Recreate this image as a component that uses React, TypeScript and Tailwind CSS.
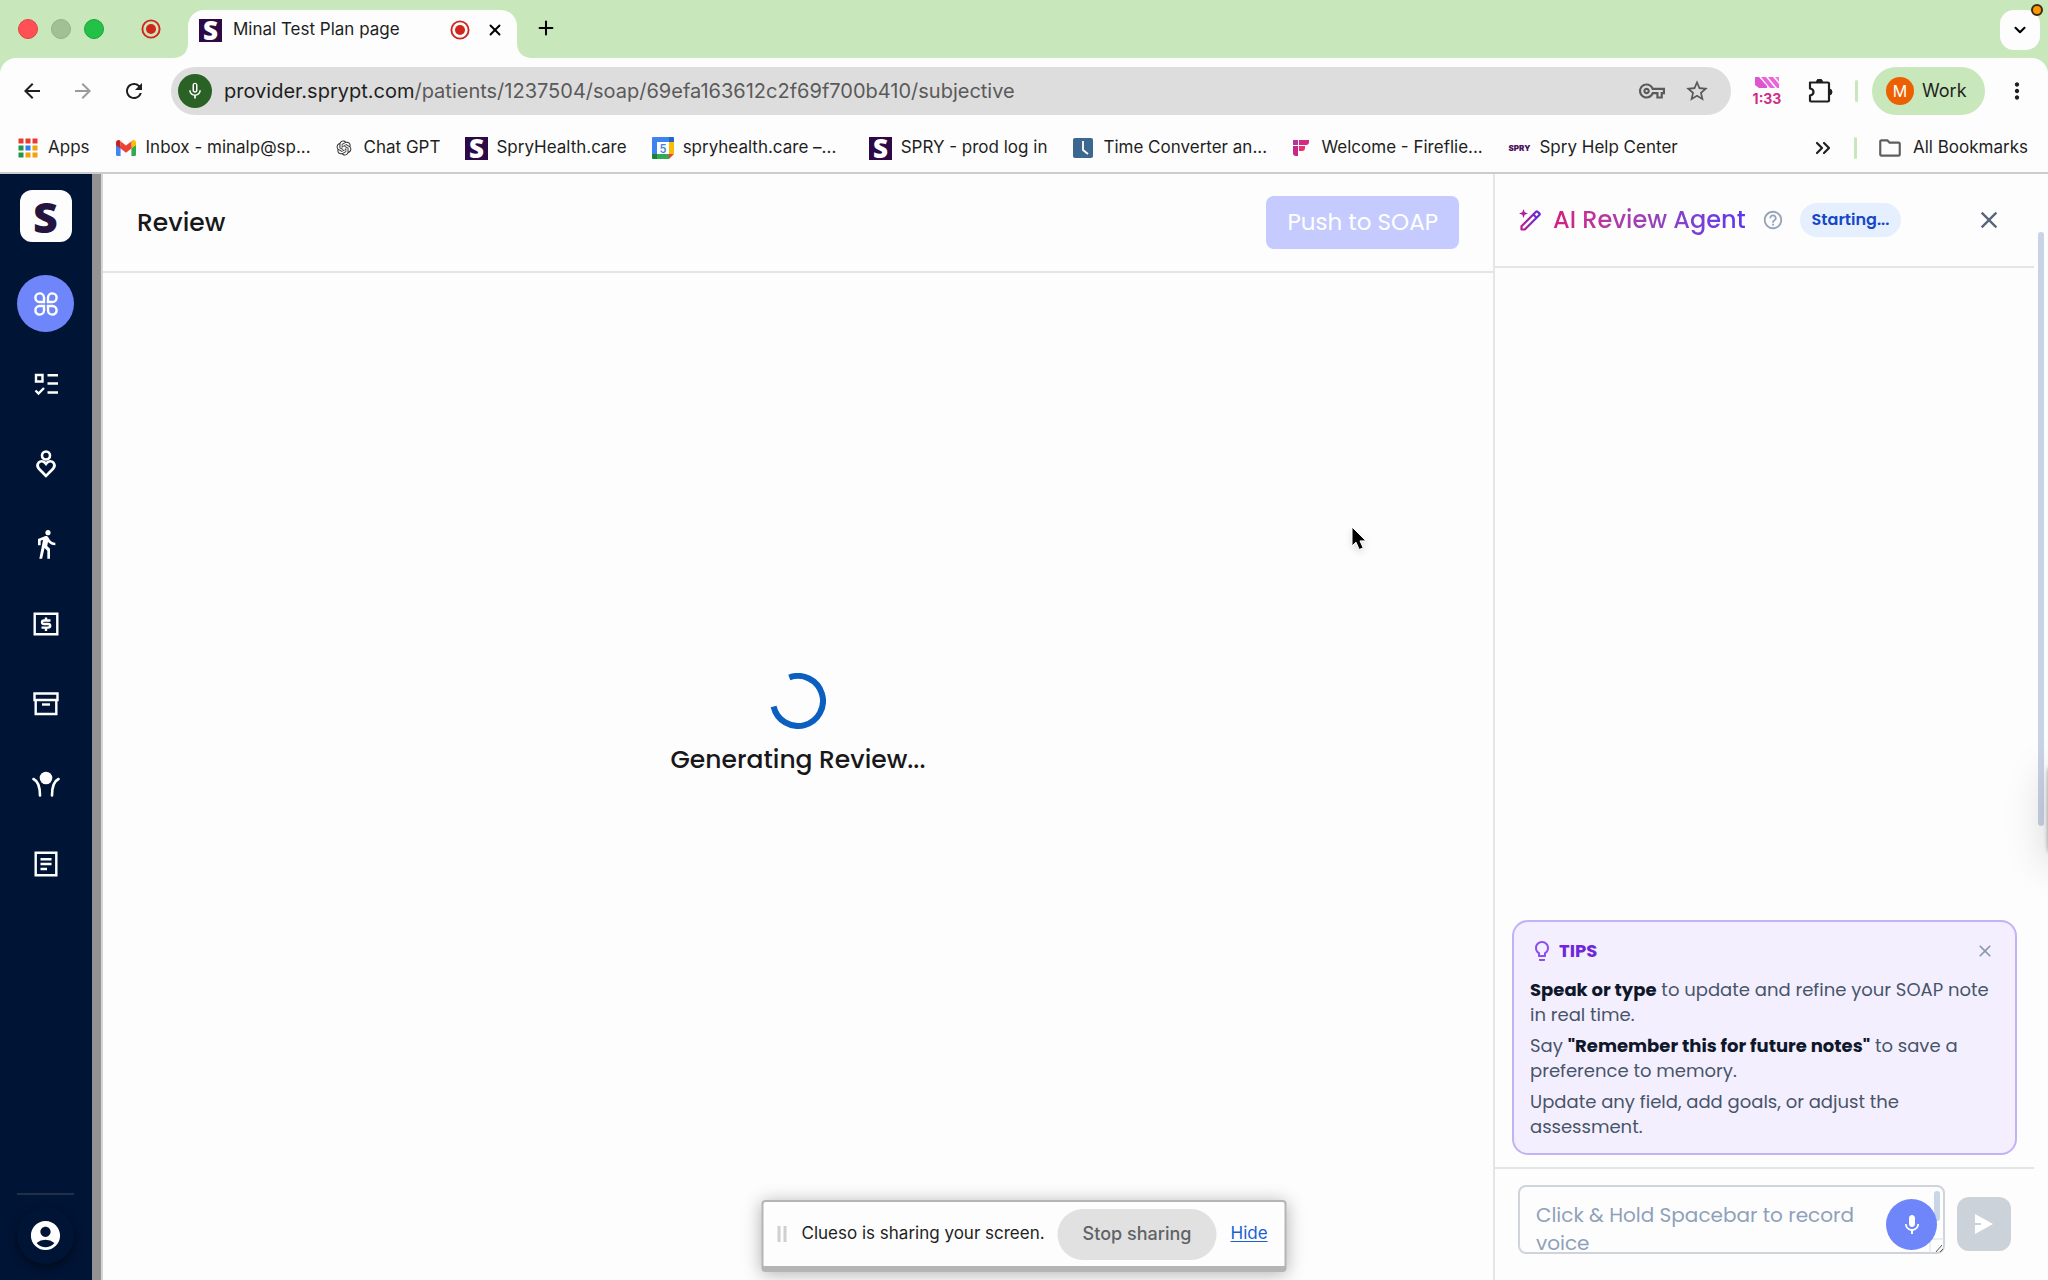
import type { ReactNode } from "react";
import {
  MdAccountCircle,
  MdArrowBack,
  MdArrowForward,
  MdClose,
  MdDirectionsWalk,
  MdHelpOutline,
  MdLightbulbOutline,
  MdMic,
  MdMicNone,
  MdMoreVert,
  MdOutlineFolder,
  MdOutlineVpnKey,
  MdRefresh,
  MdStarBorder,
} from "react-icons/md";
import { RiOpenaiFill } from "react-icons/ri";
import { ChevronDown, ChevronsRight, Plus, X } from "lucide-react";

const UI = "font-[Inter,'Liberation_Sans',sans-serif]";
const APP = "font-[Poppins,Inter,'Liberation_Sans',sans-serif]";

function SpryFavicon() {
  return (
    <span className="flex size-[23px] shrink-0 items-center justify-center bg-[#2d0a45] font-['Open_Sans',sans-serif] text-[26px] leading-none font-extrabold text-white">
      S
    </span>
  );
}

function RecordIcon() {
  return (
    <svg className="size-5 shrink-0" viewBox="0 0 20 20" aria-hidden="true">
      <circle cx="10" cy="10" r="8.6" fill="none" stroke="#d1261c" strokeWidth="1.9" />
      <circle cx="10" cy="10" r="5" fill="#d1261c" />
    </svg>
  );
}

function AppsIcon() {
  const cores = ["#ea3a30", "#ea3a30", "#ea3a30", "#23964a", "#2b7df0", "#f0a30c", "#23964a", "#f0a30c", "#f0a30c"];
  return (
    <svg className="size-5" viewBox="0 0 20 20" aria-hidden="true">
      {cores.map((c, i) => (
        <rect key={i} x={(i % 3) * 7 + 0.5} y={Math.floor(i / 3) * 7 + 0.5} width="5" height="5" fill={c} />
      ))}
    </svg>
  );
}

function GmailIcon() {
  return (
    <svg className="h-4 w-5" viewBox="0 0 20 16" aria-hidden="true">
      <path d="M0 3v11.5Q0 16 1.5 16H4.6V6z" fill="#4285f4" />
      <path d="M20 3v11.5Q20 16 18.5 16h-3.1V6z" fill="#34a853" />
      <path d="M4.6 2v6.6L0 5.2V2.6C0 .4 2.4-.8 4.2.6z" fill="#c5221f" />
      <path d="M15.4 2v6.6L20 5.2V2.6c0-2.2-2.4-3.4-4.2-2z" fill="#fbbc04" />
      <path d="M4.6 8.6V1.2L10 5.4l5.4-4.2v7.4L10 12.7z" fill="#ea4335" />
    </svg>
  );
}

function CalendarIcon() {
  return (
    <svg className="size-6" viewBox="0 0 24 24" aria-hidden="true">
      <path d="M2 1h16v5H6v12H1V2q0-1 1-1z" fill="#3f83f0" />
      <path d="M18 1h4q1 0 1 1v4h-5z" fill="#2565c8" />
      <path d="M18 6h5v12h-5z" fill="#fbbc04" />
      <path d="M6 18h12v5H6z" fill="#34a853" />
      <path d="M1 18h5v5H2q-1 0-1-1z" fill="#188038" />
      <path d="M18 18h5l-5 5z" fill="#ea4335" />
      <path d="M6 6h12v12H6z" fill="#fff" />
      <text x="12" y="16.5" textAnchor="middle" fontSize="12" fontFamily="Roboto, sans-serif" fontWeight="500" fill="#3f7fe8">
        5
      </text>
    </svg>
  );
}

function ClockIcon() {
  return (
    <svg className="size-5" viewBox="0 0 20 20" aria-hidden="true">
      <rect width="20" height="20" rx="2" fill="#3c678f" />
      <path d="M10 3v9l5 4" fill="none" stroke="#fff" strokeWidth="1.8" />
    </svg>
  );
}

function FirefliesIcon() {
  return (
    <svg className="size-4" viewBox="0 0 16 16" aria-hidden="true">
      <path d="M0 0h5v5H0z" fill="#b0389e" />
      <path d="M6 0h10v2q0 3-3 3H6z" fill="#d42a86" />
      <path d="M0 6h5v10H3q-3 0-3-3z" fill="#c22a8a" />
      <path d="M6 6h6v2q0 3-3 3H6z" fill="#ef2f6d" />
    </svg>
  );
}

type Bookmark = { label: string; icon: ReactNode; cut?: boolean };

const bookmarks: Bookmark[] = [
  { label: "Apps", icon: <AppsIcon /> },
  { label: "Inbox - minalp@sp...", icon: <GmailIcon />, cut: true },
  { label: "Chat GPT", icon: <RiOpenaiFill className="size-[18px] text-[#333]" /> },
  { label: "SpryHealth.care", icon: <SpryFavicon /> },
  { label: "spryhealth.care –...", icon: <CalendarIcon />, cut: true },
  { label: "SPRY - prod log in", icon: <SpryFavicon /> },
  { label: "Time Converter an...", icon: <ClockIcon />, cut: true },
  { label: "Welcome - Fireflie...", icon: <FirefliesIcon />, cut: true },
  {
    label: "Spry Help Center",
    icon: <span className="text-[8px] leading-none font-black text-[#4a1260]">SPRY</span>,
  },
];

function TabStrip() {
  return (
    <div className="relative flex h-[58px] items-end bg-[#c8e7ba]">
      <div className="flex h-[58px] w-[188px] shrink-0 items-center pl-[18px]">
        <div className="flex gap-[13px]">
          <span className="size-5 rounded-full border border-[#e2443f] bg-[#ff5055]" />
          <span className="size-5 rounded-full border border-[#93b386] bg-[#a1c093]" />
          <span className="size-5 rounded-full border border-[#16a637] bg-[#24c148]" />
        </div>
        <span className="ml-[37px]">
          <RecordIcon />
        </span>
      </div>

      <div className="relative flex h-12 w-[329px] items-center rounded-t-2xl bg-[#fdfdfd] pr-[13px] pb-2 pl-[11px]">
        <svg className="absolute bottom-0 -left-4 size-4" viewBox="0 0 16 16" aria-hidden="true">
          <path d="M16 0v16H0Q16 16 16 0z" fill="#fdfdfd" />
        </svg>
        <svg className="absolute -right-4 bottom-0 size-4" viewBox="0 0 16 16" aria-hidden="true">
          <path d="M0 0v16h16Q0 16 0 0z" fill="#fdfdfd" />
        </svg>
        <SpryFavicon />
        <span className="ml-[11px] flex-1 text-[17px] text-[#1f1f1f]">Minal Test Plan page</span>
        <RecordIcon />
        <button type="button" aria-label="Close tab" className="ml-4">
          <X className="size-[18px]" strokeWidth={2.5} />
        </button>
      </div>

      <button type="button" aria-label="New tab" className="mb-[19px] ml-[18px]">
        <Plus className="size-[22px]" strokeWidth={2.2} />
      </button>
      <button
        type="button"
        aria-label="Search tabs"
        className="mr-2 mb-2 ml-auto flex size-10 items-center justify-center rounded-[14px] bg-[#fdfdfd]"
      >
        <ChevronDown className="size-[18px]" strokeWidth={2.8} />
      </button>
      <span className="absolute top-1 right-[5px] size-3 rounded-full border-2 border-[#3a2c10] bg-[#ff9500]" />
    </div>
  );
}

function AddressRow() {
  return (
    <div className="flex h-[66px] items-center pr-[18px] pl-5 text-[#1f1f1f]">
      <div className="flex w-[151px] shrink-0 items-center gap-[27px]">
        <button type="button" aria-label="Back">
          <MdArrowBack className="size-6" />
        </button>
        <button type="button" aria-label="Forward" className="text-[#9b9b9b]">
          <MdArrowForward className="size-6" />
        </button>
        <button type="button" aria-label="Reload">
          <MdRefresh className="size-6" />
        </button>
      </div>
      <div className="flex h-12 flex-1 items-center rounded-full bg-[#dddddd] pr-[21px] pl-[7px]">
        <span className="flex size-[34px] items-center justify-center rounded-full bg-[#2a6124]">
          <MdMicNone className="size-5 text-white" />
        </span>
        <span className="ml-3 flex-1 text-xl text-[#5a5a5a]">
          <span className="text-[#1f1f1f]">provider.sprypt.com</span>
          /patients/1237504/soap/69efa163612c2f69f700b410/subjective
        </span>
        <MdOutlineVpnKey className="size-[26px] text-[#5a5a5a]" />
        <MdStarBorder className="ml-[19px] size-[26px] text-[#5a5a5a]" />
      </div>
      <div className="ml-[22px] flex w-7 flex-col items-center gap-1">
        <svg className="h-[11px] w-6" viewBox="0 0 24 11" aria-hidden="true">
          <path d="M0 0h4l8 9v2H4L0 8z" fill="#dd55cf" />
          <path d="M6 0h5l9 11h-5zM13 0h5l6 7v4h-2z" fill="#e765d8" />
          <path d="M20 0h4v5z" fill="#f07be3" />
        </svg>
        <span className="text-sm leading-none font-bold text-[#cf2d86]">1:33</span>
      </div>
      <button type="button" aria-label="Extensions" className="ml-[26px]">
        <svg className="h-6 w-[26px]" viewBox="0 0 26 24" fill="none" stroke="#1f1f1f" strokeWidth="2.2" strokeLinejoin="round" aria-hidden="true">
          <path d="M3 3.5h18q1 0 1 1v17q0 1-1 1H4q-1 0-1-1v-5q3.500-.5 3.500-3.500T3 9.500v-5z" />
          <path d="M9.500 3a3 3 0 0 1 6 0zM22 10a3 3 0 0 1 0 6z" fill="#1f1f1f" strokeWidth="1" />
        </svg>
      </button>
      <span className="ml-[22px] h-[22px] w-[3px] rounded bg-[#c8e7ba]" />
      <button type="button" className="ml-[14px] flex h-12 w-[113px] items-center gap-2 rounded-full bg-[#c8e7ba] pl-[14px]">
        <span className="flex size-7 items-center justify-center rounded-full bg-[#ed6001] text-base text-white">M</span>
        <span className="text-lg">Work</span>
      </button>
      <button type="button" aria-label="Browser menu" className="ml-[19px]">
        <MdMoreVert className="size-[26px]" />
      </button>
    </div>
  );
}

function BookmarksBar() {
  return (
    <nav aria-label="Bookmarks" className="flex h-[50px] items-center border-b-2 border-[#cccccc] pr-5 pl-4 text-[17px] text-[#1f1f1f]">
      <div className="flex items-center gap-6">
        {bookmarks.map((b) => (
          <a key={b.label} href="#" className="flex items-center gap-2 whitespace-nowrap">
            <span className="flex w-6 shrink-0 items-center justify-center">{b.icon}</span>
            <span className={b.cut ? "w-[162px]" : ""}>{b.label}</span>
          </a>
        ))}
      </div>
      <button type="button" aria-label="More bookmarks" className="ml-auto">
        <ChevronsRight className="size-6" strokeWidth={2.2} />
      </button>
      <span className="mr-5 ml-[19px] h-[22px] w-[3px] rounded bg-[#c8e7ba]" />
      <a href="#" className="flex items-center gap-[10px]">
        <MdOutlineFolder className="size-[26px] text-[#5f5f5f]" />
        All Bookmarks
      </a>
    </nav>
  );
}

const line = { fill: "none", stroke: "currentColor", strokeWidth: 2 };

const navItems: { label: string; icon: ReactNode }[] = [
  {
    label: "Dashboard",
    icon: (
      <svg className="size-7" viewBox="0 0 28 28" {...line} strokeWidth={2.4} aria-hidden="true">
        <path d="M12 12H7.500a4.300 4.300 0 1 1 4.500-4.500zM16 12V7.500a4.300 4.300 0 1 1 4.500 4.500zM12 16v4.500A4.300 4.300 0 1 1 7.500 16zM16 16h4.500a4.300 4.300 0 1 1-4.500 4.500z" />
      </svg>
    ),
  },
  {
    label: "Tasks",
    icon: (
      <svg className="size-7" viewBox="0 0 28 28" {...line} strokeWidth={2.4} aria-hidden="true">
        <path d="M4 5h6.500v6.500H4zM15.500 5.200H26M15.500 13.500H26M15.500 22.500H26M3.500 20.500l3 3 5.500-5.500" />
      </svg>
    ),
  },
  {
    label: "Patients",
    icon: (
      <svg className="size-7" viewBox="0 0 28 28" {...line} strokeWidth={2.6} aria-hidden="true">
        <circle cx="14" cy="5.500" r="4" />
        <path d="M14 26l-7.300-7.500a4.600 4.600 0 0 1 0-6 4.400 4.400 0 0 1 6 0L14 14l1.300-1.500a4.400 4.400 0 0 1 6 0 4.600 4.600 0 0 1 0 6z" />
      </svg>
    ),
  },
  { label: "Exercises", icon: <MdDirectionsWalk className="size-8" /> },
  {
    label: "Billing",
    icon: (
      <svg className="size-7" viewBox="0 0 28 28" {...line} strokeWidth={2.4} aria-hidden="true">
        <path d="M2.700 3.700h22.600v20.600H2.700z" />
        <path d="M18.500 10.500h-6.500q-2 0-2 1.800t2 1.700h4q2.200 0 2.200 1.800t-2.200 1.800H9.500M14 7.500v3M14 18v3" />
      </svg>
    ),
  },
  {
    label: "Inventory",
    icon: (
      <svg className="size-7" viewBox="0 0 28 28" {...line} strokeWidth={2.400} aria-hidden="true">
        <path d="M2.500 3.500h23v6.500h-23zM3.700 10v14h20.600V10" />
        <path d="M10 14.500h8" />
      </svg>
    ),
  },
  {
    label: "Outreach",
    icon: (
      <svg className="size-7" viewBox="0 0 28 28" {...line} strokeWidth={2.6} strokeLinecap="round" aria-hidden="true">
        <circle cx="14" cy="8" r="6.300" fill="currentColor" stroke="none" />
        <path d="M1.500 9Q8 12 8 25.500M26.500 9Q20 12 20 25.500" />
      </svg>
    ),
  },
  {
    label: "Reports",
    icon: (
      <svg className="size-7" viewBox="0 0 28 28" {...line} strokeWidth={2.4} aria-hidden="true">
        <path d="M3.700 2.700h20.600v22.600H3.700zM8.500 9.200h11M8.500 14h11M8.500 19h6.500" />
      </svg>
    ),
  },
];

function Sidebar() {
  return (
    <aside className="flex w-[92px] shrink-0 flex-col items-center bg-[#001435] pt-4 pr-px pb-4 text-white">
      <span className="flex size-[52px] items-center justify-center rounded-xl bg-[#fdfdfd] font-['Open_Sans',sans-serif] text-[43px] leading-none font-extrabold text-[#24143f]">
        S
      </span>
      <nav aria-label="Main" className="mt-[33px] flex flex-col gap-[23px]">
        {navItems.map((item, i) => (
          <a
            key={item.label}
            href="#"
            aria-label={item.label}
            className={`flex size-[57px] items-center justify-center rounded-full ${i === 0 ? "bg-[#6f86fb]" : ""}`}
          >
            {item.icon}
          </a>
        ))}
      </nav>
      <hr className="mt-auto w-[57px] border-t-2 border-[#232f45]" />
      <button
        type="button"
        aria-label="Account"
        className="mt-3 flex size-[57px] items-center justify-center rounded-full shadow-[0_3px_8px_rgba(0,0,0,0.5)]"
      >
        <MdAccountCircle className="size-[35px]" />
      </button>
    </aside>
  );
}

function ReviewPane() {
  return (
    <main className="flex min-w-0 flex-1 flex-col">
      <header className="flex h-[99px] items-center justify-between border-b-2 border-[#e3e6e8] pr-[34px] pl-[34px]">
        <h1 className="text-[25px] font-medium text-[#18181b]">Review</h1>
        <button type="button" disabled className="h-[53px] rounded-lg bg-[#c5cbfe] px-[21px] text-[23px] text-white">
          Push to SOAP
        </button>
      </header>
      <div className="flex flex-1 flex-col items-center justify-center gap-3 pb-[102px]" role="status">
        <svg className="size-14" viewBox="0 0 56 56" aria-hidden="true">
          <path d="M19.300 4.500A25 25 0 1 1 3.600 33.500" fill="none" stroke="#0b5fc0" strokeWidth="6" />
        </svg>
        <p className="text-[25px] font-medium text-[#18181b]">Generating Review...</p>
      </div>
    </main>
  );
}

function TipsCard() {
  return (
    <section className="mx-[17px] mb-3 rounded-2xl border-2 border-[#c3b2f5] bg-[#f4effe] px-4 pt-[17px] pb-[14px]">
      <div className="flex items-center pr-1">
        <MdLightbulbOutline className="size-6 text-[#8b4ff0]" />
        <h3 className="ml-[5px] flex-1 text-[18px] leading-6 font-bold text-[#6d28d9]">TIPS</h3>
        <button type="button" aria-label="Dismiss tips" className="text-[#8b98ad]">
          <MdClose className="size-5" />
        </button>
      </div>
      <div className="mt-[14px] flex flex-col gap-[6px] text-[18px] leading-[25px] text-[#475569] [&_strong]:text-[#0f172a]">
        <p>
          <strong>Speak or type</strong> to update and refine your SOAP note in real time.
        </p>
        <p>
          Say <strong>"Remember this for future notes"</strong> to save a preference to memory.
        </p>
        <p>Update any field, add goals, or adjust the assessment.</p>
      </div>
    </section>
  );
}

function Composer() {
  return (
    <form className="flex h-[113px] items-start gap-3 border-t-2 border-[#e3e6e8] pt-4 pr-[23px] pl-[23px]">
      <div className="relative flex min-w-0 flex-1">
        <textarea
          aria-label="Message"
          placeholder="Click & Hold Spacebar to record voice"
          className="h-[69px] min-w-0 flex-1 resize-none overflow-hidden rounded-lg border-2 border-[#cfd4da] bg-transparent py-[14px] pr-[80px] pl-4 text-[20px] leading-7 placeholder:text-[#8fa1ba]"
        />
        <span className="absolute top-[6px] right-[5px] h-[30px] w-[6px] rounded-full bg-[#cbd5e8]" />
        <svg className="absolute right-0 bottom-0 size-4" viewBox="0 0 16 16" fill="none" aria-hidden="true">
          <path d="M1 15V1h14" stroke="#dcdfe3" />
          <path d="M7 14l6-7M11 14l3-3" stroke="#555" />
        </svg>
        <button
          type="button"
          aria-label="Record voice"
          className="absolute right-2 bottom-1 flex size-[51px] items-center justify-center rounded-full bg-[#6f86fb] text-white"
        >
          <MdMic className="size-6" />
        </button>
      </div>
      <button type="submit" aria-label="Send" disabled className="mt-3 flex h-[54px] w-[54px] items-center justify-center rounded-xl bg-[#cbd2d9]">
        <svg className="h-[22px] w-5" viewBox="0 0 20 22" aria-hidden="true">
          <path d="M1 1l18 10L1 21z" fill="#fff" />
          <path d="M1 11h6" stroke="#cbd2d9" strokeWidth="2" />
        </svg>
      </button>
    </form>
  );
}

function AgentPane() {
  return (
    <aside className="flex w-[555px] shrink-0 border-l-2 border-[#e5e5e8]">
      <div className="flex min-w-0 flex-1 flex-col">
        <header className="flex h-[94px] items-center border-b-2 border-[#e3e6e8] pr-[31px] pl-6">
          <svg className="size-[22px]" viewBox="0 0 22 22" fill="none" aria-hidden="true">
            <defs>
              <linearGradient id="grad-caneta" x1="0" y1="0" x2="22" y2="0" gradientUnits="userSpaceOnUse">
                <stop offset="0%" stopColor="#c81888" />
                <stop offset="100%" stopColor="#5b2be0" />
              </linearGradient>
            </defs>
            <path d="M4.500 0l1.200 3.300L9 4.500 5.700 5.700 4.500 9 3.300 5.700 0 4.500l3.300-1.200z" fill="url(#grad-caneta)" />
            <path d="M2.500 20.500v-3.300L17 2.700q.8-.8 1.600 0l1.700 1.700q.8.800 0 1.600L5.800 20.500zM14.300 5.500l3.300 3.300" stroke="url(#grad-caneta)" strokeWidth="2.2" strokeLinejoin="round" />
          </svg>
          <h2 className="ml-3 bg-gradient-to-r from-[#d6187f] to-[#5b35f0] bg-clip-text text-2xl font-medium text-transparent">
            AI Review Agent
          </h2>
          <button type="button" aria-label="Help" className="ml-4 text-[#94a3b8]">
            <MdHelpOutline className="size-[22px]" />
          </button>
          <span className="ml-4 rounded-full bg-[#e6effe] px-3 text-base leading-[34px] font-semibold text-[#1547c8]">Starting...</span>
          <button type="button" aria-label="Close" className="ml-auto text-[#57657b]">
            <MdClose className="size-7" />
          </button>
        </header>
        <div className="flex-1" />
        <TipsCard />
        <Composer />
      </div>
      <div className="w-[14px] shrink-0 pt-[58px] pl-1">
        <div className="h-[594px] w-[6px] rounded-full bg-[#c9d3e6]" />
      </div>
    </aside>
  );
}

function ShareBar() {
  return (
    <div className="absolute bottom-2 left-1/2 flex h-[72px] w-[525px] -translate-x-1/2 items-center rounded-[4px] border-2 border-b-[6px] border-[#b5b5b5] bg-[#fdfdfd] pl-[14px] text-[#1f1f1f] shadow-[0_2px_18px_rgba(0,0,0,0.3)]">
      <span className="flex h-4 gap-[3px]">
        <span className="w-[3px] bg-[#cfcfcf]" />
        <span className="w-[3px] bg-[#cfcfcf]" />
      </span>
      <span className="ml-[15px] w-[241px] text-[17px] whitespace-nowrap">Clueso is sharing your screen.</span>
      <button type="button" className="ml-[15px] h-[51px] w-[159px] rounded-full bg-[#e1e1e1] text-lg font-medium text-[#5f6368]">
        Stop sharing
      </button>
      <a href="#" className="ml-[14px] text-[17px] text-[#1a5fd6] underline underline-offset-2">
        Hide
      </a>
    </div>
  );
}

export default function App() {
  return (
    <div className={`relative flex h-screen flex-col overflow-hidden bg-[#fdfdfd] ${UI}`}>
      <div className="bg-[#c8e7ba]">
        <TabStrip />
        <div className="rounded-t-2xl bg-[#fdfdfd]">
          <AddressRow />
          <BookmarksBar />
        </div>
      </div>
      <div className={`flex min-h-0 flex-1 ${APP}`}>
        <Sidebar />
        <div className="w-[11px] shrink-0 border-r-2 border-[#d5d5d5] bg-[#929193]" />
        <ReviewPane />
        <AgentPane />
      </div>
      <ShareBar />
      {/* widget docked past the right edge, only its shadow shows */}
      <div className="absolute top-[765px] -right-10 h-[90px] w-10 rounded-lg shadow-[0_0_4px_rgba(0,0,0,0.4),0_8px_44px_rgba(0,0,0,0.18)]" />
      <svg className="absolute top-[525px] left-[1350px] h-7 w-[18px] drop-shadow-md" viewBox="0 0 18 28" aria-hidden="true">
        <path d="M2 2v19l4-3.800 3.200 7.300 4-1.600-3.200-7H16z" fill="#000" stroke="#fff" strokeWidth="1" />
      </svg>
    </div>
  );
}
